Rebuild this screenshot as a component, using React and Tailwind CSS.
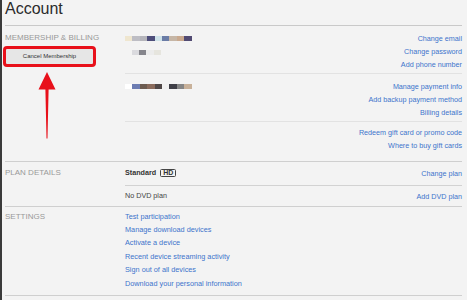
import React from 'react'

const font = { fontFamily: '"Liberation Sans", Arial, sans-serif' }

const blurRows = {
  email: ['#efe6cf', '#bdbdc4', '#b5b5bb', '#4d4d7a', '#cfe3ea', '#6b7ca6', '#c6b6a6', '#c9a98f', '#514a72'],
  phone: ['#dadade', '#85858c', '#ececec', '#e6e5de'],
  card: ['#ffffff', '#6d7db2', '#6c5b50', '#8a6b5c', '#4f4747', '#f1f1f1', '#3f3f47', '#858585', '#c8b19a'],
}

function Pixels({ colors, className = '' }) {
  return (
    <div className={`flex h-[5px] blur-[0.4px] ${className}`}>
      {colors.map((c, i) => (
        <div key={i} className="w-[7.4px] h-full" style={{ backgroundColor: c }} />
      ))}
    </div>
  )
}

function Link({ children }) {
  return <div className="text-[#3d74cc] leading-[13px]">{children}</div>
}

function Label({ children, className = '' }) {
  return (
    <div className={`w-[120px] shrink-0 text-[8px] leading-[10px] text-[#999] uppercase ${className}`}>
      {children}
    </div>
  )
}

export default function App() {
  return (
    <div className="relative w-[467px] h-[300px] bg-[#f3f3f3] flex overflow-hidden" style={font}>
      <div className="w-[2px] h-full bg-[#3a3a3a] shrink-0" />

      <div className="ml-[3px] w-[457px] flex flex-col">
        {/* Title */}
        <div className="h-[25px] text-[16px] leading-[16px] text-[#2b2b2b] pt-[0.5px]">Account</div>
        <div className="h-px bg-[#c9c9c9]" />

        {/* Membership & billing */}
        <div className="h-[135px] flex">
          <div className="w-[120px] shrink-0 pt-[7px]">
            <Label>Membership &amp; Billing</Label>
            <button className="mt-[6px] ml-[1px] w-[87px] h-[15px] bg-[#e6e6e6] rounded-[1px] shadow-[0_1px_1.5px_rgba(0,0,0,0.22)] text-[6px] text-[#333] flex items-center justify-center outline-3 outline-[#e8101a] outline-offset-[0.5px]">
              Cancel Membership
            </button>
          </div>

          <div className="flex-1 flex flex-col text-[7.2px]">
            <div className="flex justify-between pt-[5.5px] pb-[2.5px]">
              <div>
                <div className="h-[13px] flex items-center"><Pixels colors={blurRows.email} /></div>
                <div className="h-[13px] flex items-center pt-[3px]"><Pixels colors={blurRows.phone} className="ml-[6.7px]" /></div>
              </div>
              <div className="text-right">
                <Link>Change email</Link>
                <Link>Change password</Link>
                <Link>Add phone number</Link>
              </div>
            </div>
            <div className="h-px bg-[#e2e2e2]" />

            <div className="flex justify-between pt-[5.5px] pb-[2.5px]">
              <div>
                <div className="h-[13px] flex items-center"><Pixels colors={blurRows.card} /></div>
              </div>
              <div className="text-right">
                <Link>Manage payment info</Link>
                <Link>Add backup payment method</Link>
                <Link>Billing details</Link>
              </div>
            </div>
            <div className="h-px bg-[#e2e2e2]" />

            <div className="flex justify-end pt-[3.5px] text-right">
              <div>
                <Link>Redeem gift card or promo code</Link>
                <Link>Where to buy gift cards</Link>
              </div>
            </div>
          </div>
        </div>
        <div className="h-px bg-[#cfcfcf]" />

        {/* Plan details */}
        <div className="flex">
          <Label className="pt-[6px]">Plan Details</Label>
          <div className="flex-1 flex flex-col text-[7.2px]">
            <div className="h-[23px] flex items-center justify-between">
              <div className="flex items-center">
                <span className="font-bold text-[#333]">Standard</span>
                <span className="ml-[4px] h-[8px] px-[2px] border border-[#444] rounded-[1.5px] text-[7px] leading-[6px] font-bold text-[#333] flex items-center">HD</span>
              </div>
              <Link>Change plan</Link>
            </div>
            <div className="h-px bg-[#d2d2d2]" />
            <div className="h-[20px] flex items-center justify-between">
              <span className="text-[#444]">No DVD plan</span>
              <Link>Add DVD plan</Link>
            </div>
          </div>
        </div>
        <div className="h-px bg-[#cfcfcf]" />

        {/* Settings */}
        <div className="h-[88px] flex">
          <Label className="pt-[4.5px]">Settings</Label>
          <div className="pt-[2.5px] text-[7.3px] text-[#3d74cc] leading-[13.4px]">
            <div>Test participation</div>
            <div>Manage download devices</div>
            <div>Activate a device</div>
            <div>Recent device streaming activity</div>
            <div>Sign out of all devices</div>
            <div>Download your personal information</div>
          </div>
        </div>
        <div className="h-px bg-[#cfcfcf]" />
      </div>

      {/* annotation arrow */}
      <svg className="absolute left-0 top-0 pointer-events-none" width="467" height="300" viewBox="0 0 467 300">
        <path d="M47 72 L55.5 89.5 L48.6 89.5 L47.5 138.5 L46.5 138.5 L45.4 89.5 L38.5 89.5 Z" fill="#e8101a" />
      </svg>
    </div>
  )
}
